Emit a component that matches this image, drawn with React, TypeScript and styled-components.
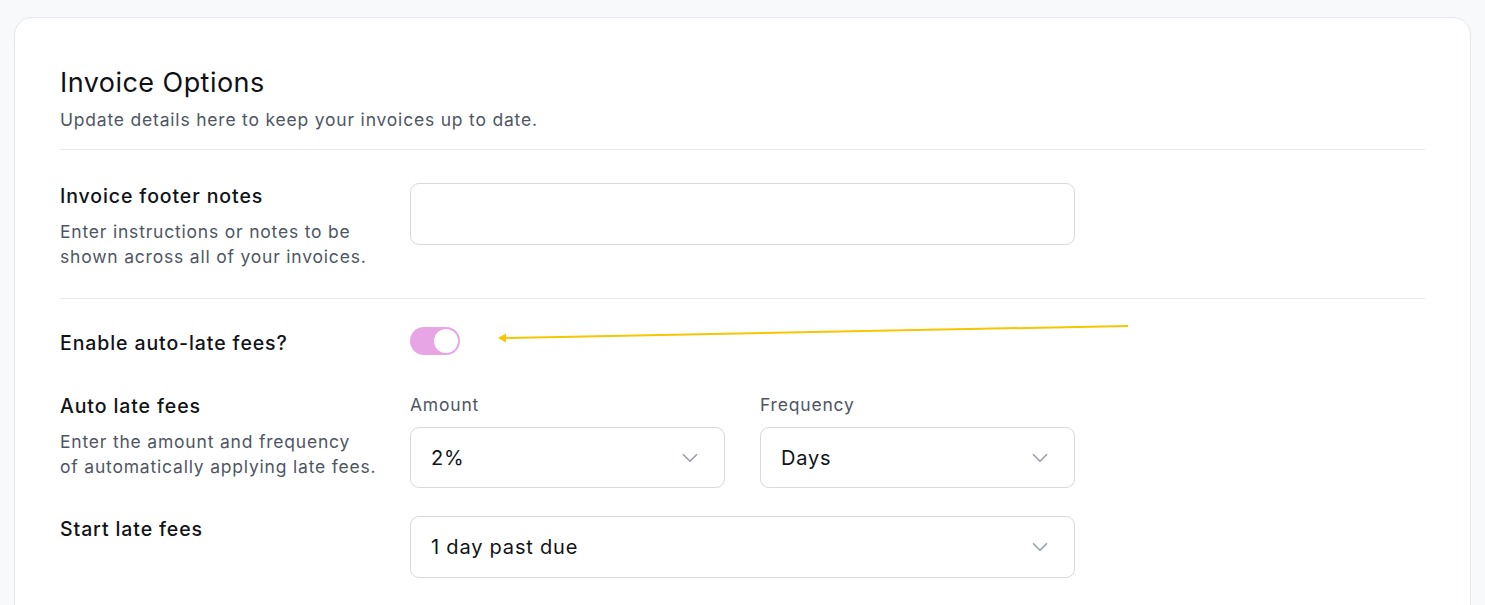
import React, { useState } from 'react';
import styled, { createGlobalStyle } from 'styled-components';
import { ChevronDown } from 'lucide-react';

const GlobalStyle = createGlobalStyle`
  html, body {
    margin: 0;
    padding: 0;
    background: #f8f9fb;
    overflow: hidden;
  }
  body {
    font-family: Inter, "Noto Sans", sans-serif;
    color: #111318;
  }
`;

const Page = styled.div`
  padding: 17px 14px 0 14px;
  height: 605px;
  box-sizing: border-box;
`;

const Card = styled.div`
  position: relative;
  background: #ffffff;
  border: 1px solid #e6e7ec;
  border-radius: 18px;
  padding: 48px 45px 45px 45px;
`;

const Header = styled.div`
  padding-bottom: 17px;
  border-bottom: 1px solid #e5e7eb;
`;

const Title = styled.h1`
  margin: 0;
  font-size: 27px;
  line-height: 33px;
  font-weight: 400;
  letter-spacing: 0.45px;
  color: #0f1115;
`;

const Subtitle = styled.p`
  margin: 9px 0 0 0;
  font-size: 17.5px;
  line-height: 24px;
  letter-spacing: 0.8px;
  color: #4f5663;
`;

const Row = styled.div<{ $divider?: boolean; $top: number; $bottom?: number; $center?: boolean }>`
  display: grid;
  grid-template-columns: 350px 665px;
  align-items: ${(p) => (p.$center ? 'center' : 'start')};
  padding-top: ${(p) => p.$top}px;
  padding-bottom: ${(p) => p.$bottom ?? 0}px;
  border-bottom: ${(p) => (p.$divider ? '1px solid #e5e7eb' : 'none')};
`;

const LabelBlock = styled.div``;

const Label = styled.div`
  font-size: 19.5px;
  line-height: 26px;
  font-weight: 500;
  letter-spacing: 0.9px;
  color: #111318;
`;

const Description = styled.div`
  margin-top: 10px;
  font-size: 17.5px;
  line-height: 25px;
  letter-spacing: 0.8px;
  color: #4f5663;
  white-space: nowrap;
`;

const TextInput = styled.input`
  box-sizing: border-box;
  width: 665px;
  height: 62px;
  border: 1px solid #d7d9df;
  border-radius: 9px;
  background: #fff;
  outline: none;
  padding: 0 20px;
  font: inherit;
  font-size: 19px;
`;

const Toggle = styled.button<{ $on: boolean }>`
  position: relative;
  width: 50px;
  height: 28px;
  border: none;
  border-radius: 14px;
  padding: 0;
  background: ${(p) => (p.$on ? '#e8a5e6' : '#d1d5db')};
  cursor: pointer;
`;

const Knob = styled.span<{ $on: boolean }>`
  position: absolute;
  top: 2px;
  left: ${(p) => (p.$on ? '24px' : '2px')};
  width: 24px;
  height: 24px;
  border-radius: 50%;
  background: #fff;
`;

const FieldPair = styled.div`
  display: grid;
  grid-template-columns: 315px 315px;
  column-gap: 35px;
`;

const Field = styled.div`
  display: flex;
  flex-direction: column;
`;

const FieldLabel = styled.div`
  font-size: 17.5px;
  line-height: 24px;
  letter-spacing: 0.8px;
  color: #4f5663;
  margin-bottom: 10px;
`;

const SelectBox = styled.div<{ $height?: number }>`
  box-sizing: border-box;
  height: ${(p) => p.$height ?? 61}px;
  border: 1px solid #d7d9df;
  border-radius: 9px;
  background: #fff;
  display: flex;
  align-items: center;
  justify-content: space-between;
  padding: 0 21px 0 20px;
  font-size: 20px;
  letter-spacing: 0.8px;
  color: #111318;
  cursor: pointer;
`;

const Arrow = styled.svg`
  position: absolute;
  left: 0;
  top: 0;
  pointer-events: none;
`;

const Select = ({ value, height }: { value: string; height?: number }) => (
  <SelectBox $height={height}>
    <span>{value}</span>
    <ChevronDown size={26} strokeWidth={1.6} color="#9aa0ad" />
  </SelectBox>
);

export default function App() {
  const [lateFees, setLateFees] = useState(true);

  return (
    <>
      <GlobalStyle />
      <Page>
        <Card>
          <Header>
            <Title>Invoice Options</Title>
            <Subtitle>Update details here to keep your invoices up to date.</Subtitle>
          </Header>

          <Row $divider $top={33} $bottom={29}>
            <LabelBlock>
              <Label>Invoice footer notes</Label>
              <Description>
                Enter instructions or notes to be
                <br />
                shown across all of your invoices.
              </Description>
            </LabelBlock>
            <TextInput />
          </Row>

          <Row $top={28} $center>
            <Label>Enable auto-late fees?</Label>
            <div>
              <Toggle $on={lateFees} onClick={() => setLateFees(!lateFees)}>
                <Knob $on={lateFees} />
              </Toggle>
            </div>
          </Row>

          <Row $top={34}>
            <LabelBlock>
              <Label>Auto late fees</Label>
              <Description>
                Enter the amount and frequency
                <br />
                of automatically applying late fees.
              </Description>
            </LabelBlock>
            <FieldPair>
              <Field>
                <FieldLabel>Amount</FieldLabel>
                <Select value="2%" />
              </Field>
              <Field>
                <FieldLabel>Frequency</FieldLabel>
                <Select value="Days" />
              </Field>
            </FieldPair>
          </Row>

          <Row $top={28}>
            <Label>Start late fees</Label>
            <Select value="1 day past due" height={62} />
          </Row>

          {/* annotation arrow pointing at the toggle */}
          <Arrow width="1455" height="400" viewBox="0 0 1455 400">
            <line x1="1113" y1="308" x2="488" y2="320" stroke="#f6c600" strokeWidth="2" />
            <polygon points="483,320 491,315.5 491,324.5" fill="#f6c600" />
          </Arrow>
        </Card>
      </Page>
    </>
  );
}
